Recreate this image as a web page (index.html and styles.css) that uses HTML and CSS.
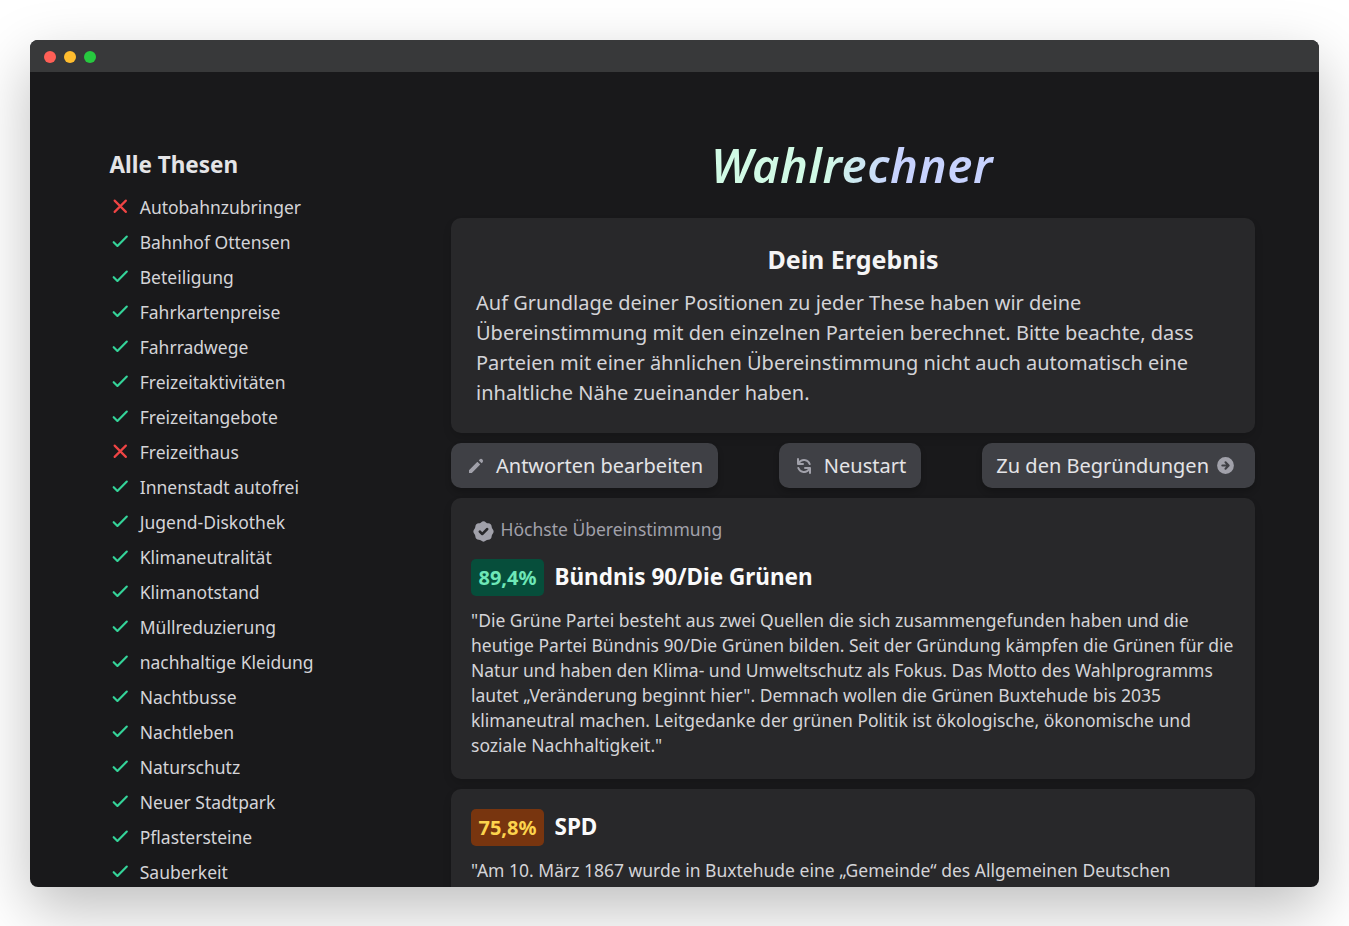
FILE: index.html
```html
<!DOCTYPE html>
<html lang="de">
<head>
<meta charset="utf-8">
<title>Wahlrechner</title>
<link rel="stylesheet" href="styles.css">
</head>
<body>
<svg class="defs" width="0" height="0">
<symbol id="yes" viewBox="0 0 24 24"><path d="M5 13l4 4L19 7" fill="none" stroke="currentColor" stroke-width="2.3" stroke-linecap="round" stroke-linejoin="round"/></symbol>
<symbol id="no" viewBox="0 0 24 24"><path d="M6 18L18 6M6 6l12 12" fill="none" stroke="currentColor" stroke-width="2.3" stroke-linecap="round"/></symbol>
</svg>
<div class="window">
<div class="titlebar"><span class="dot red"></span><span class="dot yellow"></span><span class="dot green"></span></div>
<div class="page">
<aside class="sidebar">
<h2>Alle Thesen</h2>
<ul class="theses">
<li><svg class="no"><use href="#no"/></svg>Autobahnzubringer</li>
<li><svg><use href="#yes"/></svg>Bahnhof Ottensen</li>
<li><svg><use href="#yes"/></svg>Beteiligung</li>
<li><svg><use href="#yes"/></svg>Fahrkartenpreise</li>
<li><svg><use href="#yes"/></svg>Fahrradwege</li>
<li><svg><use href="#yes"/></svg>Freizeitaktivitäten</li>
<li><svg><use href="#yes"/></svg>Freizeitangebote</li>
<li><svg class="no"><use href="#no"/></svg>Freizeithaus</li>
<li><svg><use href="#yes"/></svg>Innenstadt autofrei</li>
<li><svg><use href="#yes"/></svg>Jugend-Diskothek</li>
<li><svg><use href="#yes"/></svg>Klimaneutralität</li>
<li><svg><use href="#yes"/></svg>Klimanotstand</li>
<li><svg><use href="#yes"/></svg>Müllreduzierung</li>
<li><svg><use href="#yes"/></svg>nachhaltige Kleidung</li>
<li><svg><use href="#yes"/></svg>Nachtbusse</li>
<li><svg><use href="#yes"/></svg>Nachtleben</li>
<li><svg><use href="#yes"/></svg>Naturschutz</li>
<li><svg><use href="#yes"/></svg>Neuer Stadtpark</li>
<li><svg><use href="#yes"/></svg>Pflastersteine</li>
<li><svg><use href="#yes"/></svg>Sauberkeit</li>
</ul>
</aside>
<main class="content">
<h1><span>Wahlrechner</span></h1>
<section class="card intro">
<h2>Dein Ergebnis</h2>
<p>Auf Grundlage deiner Positionen zu jeder These haben wir deine Übereinstimmung mit den einzelnen Parteien berechnet. Bitte beachte, dass Parteien mit einer ähnlichen Übereinstimmung nicht auch automatisch eine inhaltliche Nähe zueinander haben.</p>
</section>
<nav class="actions">
<a class="button"><svg viewBox="0 0 20 20"><path d="M13.586 3.586a2 2 0 112.828 2.828l-.793.793-2.828-2.828.793-.793zM11.379 5.793L3 14.172V17h2.828l8.38-8.379-2.83-2.828z"/></svg>Antworten bearbeiten</a>
<a class="button"><svg viewBox="0 0 20 20"><path d="M4 2a1 1 0 011 1v2.101a7.002 7.002 0 0111.601 2.566 1 1 0 11-1.885.666A5.002 5.002 0 005.999 7H9a1 1 0 010 2H4a1 1 0 01-1-1V3a1 1 0 011-1zm.008 9.057a1 1 0 011.276.61A5.002 5.002 0 0014.001 13H11a1 1 0 110-2h5a1 1 0 011 1v5a1 1 0 11-2 0v-2.101a7.002 7.002 0 01-11.601-2.566 1 1 0 01.61-1.276z"/></svg>Neustart</a>
<a class="button next">Zu den Begründungen<svg viewBox="0 0 20 20"><path fill-rule="evenodd" d="M10 18a8 8 0 100-16 8 8 0 000 16zm3.707-8.707l-3-3a1 1 0 00-1.414 1.414L10.586 9H7a1 1 0 100 2h3.586l-1.293 1.293a1 1 0 101.414 1.414l3-3a1 1 0 000-1.414z"/></svg></a>
</nav>
<article class="card party">
<div class="top-match"><svg viewBox="0 0 20 20"><path fill-rule="evenodd" d="M6.267 3.455a3.066 3.066 0 001.745-.723 3.066 3.066 0 013.976 0 3.066 3.066 0 001.745.723 3.066 3.066 0 012.812 2.812c.051.643.304 1.254.723 1.745a3.066 3.066 0 010 3.976 3.066 3.066 0 00-.723 1.745 3.066 3.066 0 01-2.812 2.812 3.066 3.066 0 00-1.745.723 3.066 3.066 0 01-3.976 0 3.066 3.066 0 00-1.745-.723 3.066 3.066 0 01-2.812-2.812 3.066 3.066 0 00-.723-1.745 3.066 3.066 0 010-3.976 3.066 3.066 0 00.723-1.745 3.066 3.066 0 012.812-2.812zm7.44 5.252a1 1 0 00-1.414-1.414L9 10.586 7.707 9.293a1 1 0 00-1.414 1.414l2 2a1 1 0 001.414 0l4-4z"/></svg><span>Höchste Übereinstimmung</span></div>
<header><span class="score high">89,4%</span><h3>Bündnis 90/Die Grünen</h3></header>
<p>"Die Grüne Partei besteht aus zwei Quellen die sich zusammengefunden haben und die heutige Partei Bündnis 90/Die Grünen bilden. Seit der Gründung kämpfen die Grünen für die Natur und haben den Klima- und Umweltschutz als Fokus. Das Motto des Wahlprogramms lautet „Veränderung beginnt hier". Demnach wollen die Grünen Buxtehude bis 2035 klimaneutral machen. Leitgedanke der grünen Politik ist ökologische, ökonomische und soziale Nachhaltigkeit."</p>
</article>
<article class="card party">
<header><span class="score medium">75,8%</span><h3>SPD</h3></header>
<p>"Am 10. März 1867 wurde in Buxtehude eine „Gemeinde“ des Allgemeinen Deutschen</p>
</article>
</main>
</div>
</div>
</body>
</html>
```

FILE: styles.css
```css
* { box-sizing: border-box; margin: 0; padding: 0; }
body { width: 1349px; height: 926px; padding: 40px 30px; overflow: hidden; background: #fff; font: 20px/30px "Noto Sans", sans-serif; }
svg { flex: none; fill: currentColor; }
.defs { display: block; height: 0; }
.window { height: 847px; border-radius: 8px; overflow: hidden; background: #19191b; box-shadow: 0 22px 60px rgba(0, 0, 0, .26); }
.titlebar { height: 32px; background: #38393a; }
.titlebar { display: flex; align-items: flex-start; gap: 6px; padding: 10px 0 0 13px; }
.dot { width: 14px; height: 14px; border-radius: 50%; border: .5px solid transparent; background-clip: padding-box; }
.red { background-color: #ff5f56; }
.yellow { background-color: #ffbd2e; }
.green { background-color: #27c93f; }
.page { display: grid; grid-template-columns: 261px 804px; gap: 80px; padding: 75px 0 0 80px; color: #d4d4d8; }
.sidebar h2 { font-size: 22.5px; line-height: 36px; margin-left: -.5px; font-weight: 700; color: #e4e4e7; }
.theses { list-style: none; display: grid; gap: 10px; margin-top: 12px; font-size: 17.5px; line-height: 25px; }
.theses li { display: flex; gap: 8px; white-space: nowrap; }
.theses svg { width: 22.5px; height: 22.5px; margin-left: -.8px; color: #34d399; }
.theses svg.no { color: #ef4444; }
.content { display: flex; flex-direction: column; gap: 10px; }
h1 { height: 61px; padding-left: 2px; text-align: center; font: italic 600 47px/37px "Noto Sans", sans-serif; letter-spacing: .6px; }
h1 span { display: inline-block; padding-right: 4px; background: linear-gradient(100deg, #d1fae5 40%, #c7d2fe 65%); -webkit-background-clip: text; background-clip: text; color: transparent; }
.card { border-radius: 10px; background: #28282a; box-shadow: 0 5px 8px rgba(0, 0, 0, .12); }
.intro { padding: 25px; }
.intro h2 { font-size: 25px; line-height: 32px; font-weight: 700; text-align: center; margin-bottom: 13px; color: #f4f4f5; }
.actions { display: flex; justify-content: space-between; }
.button { height: 45px; padding: 0 15px; display: flex; align-items: center; gap: 10px; border-radius: 10px; background: #3f4045; color: #e4e4e7; box-shadow: 0 4px 6px rgba(0, 0, 0, .2); }
.button svg { width: 20px; height: 20px; color: #a1a1aa; }
.next { gap: 6px; padding: 0 19px 0 14.5px; }
.next svg { width: 21px; height: 21px; }
.party { padding: 20px 20px 21px; font-size: 17.5px; line-height: 25px; }
.top-match { display: flex; align-items: flex-start; height: 25px; gap: 5px; margin-bottom: 16px; color: #a1a1aa; }
.top-match svg { width: 25px; height: 25px; margin-top: 1px; }
.top-match span { margin: -1px 0 0 -.5px; }
.party header { display: flex; align-items: center; gap: 10.5px; margin-bottom: 12px; }
.party h3 { font-size: 22.5px; line-height: 33px; padding-bottom: 2px; font-weight: 700; color: #fafafa; }
.score { width: 73px; height: 37px; line-height: 37px; font-size: 20px; font-weight: 700; text-align: center; border-radius: 5px; }
.high { background: #064e3b; color: #6ee7b7; }
.medium { background: #78350f; color: #fcd34d; }
```
